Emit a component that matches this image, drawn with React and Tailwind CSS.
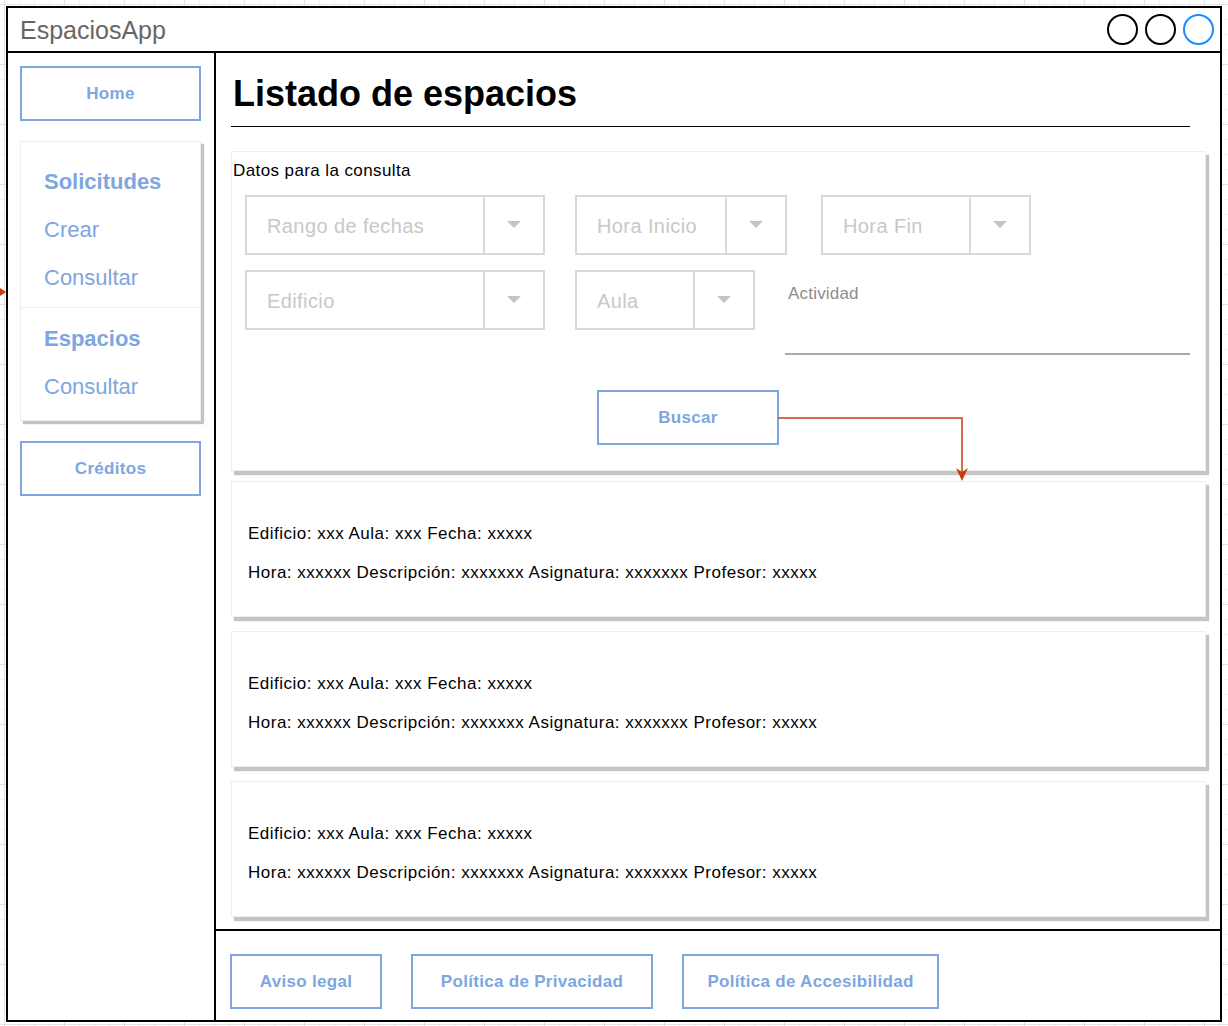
import React from "react";

// Wireframe of the "Listado de espacios" page
const font = { fontFamily: '"Liberation Sans", Arial, sans-serif' };

function Dropdown({ label, className }) {
  return (
    <div className={`flex h-[60px] border-2 border-[#d9d9d9] ${className}`}>
      <div className="flex flex-1 items-center pl-[20px] pt-[2px] text-[20px] tracking-[0.4px] text-[#c8c8c8]">{label}</div>
      <div className="flex w-[60px] items-center justify-center border-l-2 border-[#d9d9d9]">
        <svg width="14" height="8" viewBox="0 0 14 8">
          <path d="M0 0 L14 0 L7 7 Z" fill="#c4c4c4" />
        </svg>
      </div>
    </div>
  );
}

function OutlineButton({ children, className }) {
  return (
    <div
      className={`flex items-center justify-center border-2 border-[#7ea6e0] text-[17px] font-bold tracking-[0.3px] text-[#7ea6e0] ${className}`}
    >
      {children}
    </div>
  );
}

function ResultCard() {
  return (
    <div className="h-[136px] w-[975px] border border-[#eeeeee] bg-white pl-[16px] pt-[42px] text-[17px] tracking-[0.5px] text-black shadow-[3px_4px_1px_#c4c4c4]">
      <p className="leading-[20px]">Edificio: xxx Aula: xxx Fecha: xxxxx</p>
      <p className="mt-[19px] leading-[20px]">
        Hora: xxxxxx Descripción: xxxxxxx Asignatura: xxxxxxx Profesor: xxxxx
      </p>
    </div>
  );
}

export default function App() {
  return (
    <div
      style={font}
      className="relative h-[1026px] w-[1228px] overflow-hidden bg-white bg-[linear-gradient(to_right,#e3e3e3_1px,transparent_1px),linear-gradient(to_bottom,#e3e3e3_1px,transparent_1px),linear-gradient(to_right,#f1f1f1_1px,transparent_1px),linear-gradient(to_bottom,#f1f1f1_1px,transparent_1px)] bg-[size:60px_60px,60px_60px,15px_15px,15px_15px] bg-[position:4px_4px] p-[6px]"
    >
      {/* arrow tip coming from outside the window */}
      <svg className="absolute left-0 top-[287px]" width="7" height="10" viewBox="0 0 7 10">
        <path d="M0 1 L6 5 L0 9 Z" fill="#cc3d0c" />
      </svg>

      <div className="flex h-[1016px] w-[1216px] flex-col border-2 border-black bg-white">
        {/* Title bar */}
        <header className="flex h-[45px] items-center justify-between border-b-2 border-black pl-[12px] pr-[6px]">
          <span className="pt-[2px] text-[25px] text-[#666666]">EspaciosApp</span>
          <div className="flex gap-[7px]">
            <div className="h-[31px] w-[31px] rounded-full border-2 border-black" />
            <div className="h-[31px] w-[31px] rounded-full border-2 border-black" />
            <div className="h-[31px] w-[31px] rounded-full border-2 border-[#1a8cff]" />
          </div>
        </header>

        <div className="flex flex-1">
          {/* Sidebar */}
          <aside className="w-[208px] shrink-0 border-r-2 border-black pl-[12px] pt-[13px]">
            <OutlineButton className="h-[55px] w-[181px]">Home</OutlineButton>

            <nav className="mt-[20px] w-[181px] border border-[#eeeeee] pb-[10px] pt-[15px] text-[22px] text-[#7ea6e0] shadow-[3px_3px_1px_#c4c4c4]">
              <div className="flex h-[48px] items-center pl-[23px] font-bold">Solicitudes</div>
              <div className="flex h-[48px] items-center pl-[23px]">Crear</div>
              <div className="flex h-[48px] items-center pl-[23px]">Consultar</div>
              <div className="my-[6px] h-px bg-[#eeeeee]" />
              <div className="flex h-[48px] items-center pl-[23px] font-bold">Espacios</div>
              <div className="flex h-[48px] items-center pl-[23px]">Consultar</div>
            </nav>

            <OutlineButton className="mt-[20px] h-[55px] w-[181px]">Créditos</OutlineButton>
          </aside>

          {/* Main column */}
          <main className="flex flex-1 flex-col">
            <div className="relative flex-1 pl-[15px]">
              <h1 className="w-[959px] border-b border-black pb-[11px] pl-[2px] pt-[20px] text-[36px] font-bold leading-[42px] text-black">
                Listado de espacios
              </h1>

              {/* Query panel */}
              <section className="mt-[24px] h-[320px] w-[975px] border border-[#eeeeee] bg-white shadow-[3px_4px_1px_#c4c4c4]">
                <p className="pl-[1px] pt-[9px] text-[17px] leading-[20px] tracking-[0.4px] text-black">Datos para la consulta</p>
                <div className="mt-[14px] flex pl-[13px]">
                  <Dropdown label="Rango de fechas" className="w-[300px]" />
                  <Dropdown label="Hora Inicio" className="ml-[30px] w-[212px]" />
                  <Dropdown label="Hora Fin" className="ml-[34px] w-[210px]" />
                </div>
                <div className="mt-[15px] flex items-start pl-[13px]">
                  <Dropdown label="Edificio" className="w-[300px]" />
                  <Dropdown label="Aula" className="ml-[30px] w-[180px]" />
                  <div className="ml-[30px] w-[405px]">
                    <p className="pl-[3px] pt-[14px] text-[17px] leading-[20px] tracking-[0.2px] text-[#8c8c8c]">Actividad</p>
                    <div className="mt-[49px] h-[2px] bg-[#a9a9a9]" />
                  </div>
                </div>
                <OutlineButton className="ml-[365px] mt-[35px] h-[55px] w-[182px]">Buscar</OutlineButton>
              </section>

              {/* Connector from Buscar to results */}
              <svg className="absolute left-[562px] top-[363px]" width="192" height="68" viewBox="0 0 192 68">
                <path d="M0 2 H184 V58" fill="none" stroke="#cc3d0c" strokeWidth="1.5" />
                <path d="M178 52 L184 56 L190 52 L184 65 Z" fill="#cc3d0c" />
              </svg>

              {/* Results */}
              <div className="mt-[10px] flex flex-col gap-[14px]">
                <ResultCard />
                <ResultCard />
                <ResultCard />
              </div>
            </div>

            {/* Footer */}
            <footer className="flex h-[91px] gap-[29px] border-t-2 border-black pl-[14px] pt-[23px]">
              <OutlineButton className="h-[55px] w-[152px]">Aviso legal</OutlineButton>
              <OutlineButton className="h-[55px] w-[242px]">Política de Privacidad</OutlineButton>
              <OutlineButton className="h-[55px] w-[257px]">Política de Accesibilidad</OutlineButton>
            </footer>
          </main>
        </div>
      </div>
    </div>
  );
}
